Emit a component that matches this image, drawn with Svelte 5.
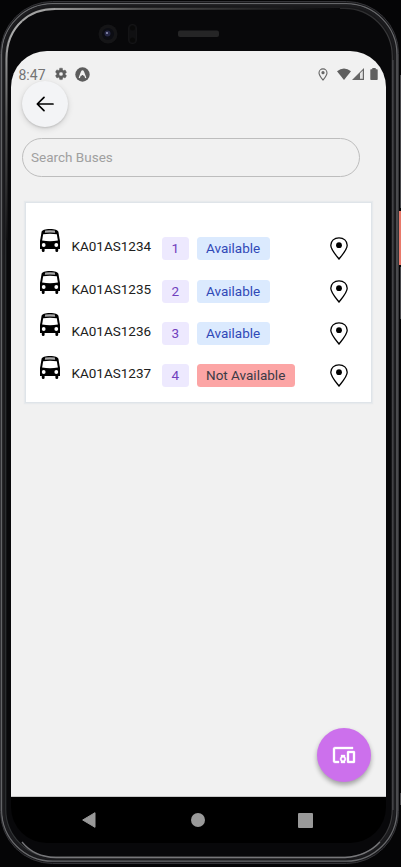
<script>
  const buses = [
    { plate: 'KA01AS1234', route: 1, available: true },
    { plate: 'KA01AS1235', route: 2, available: true },
    { plate: 'KA01AS1236', route: 3, available: true },
    { plate: 'KA01AS1237', route: 4, available: false }
  ];
</script>

<div class="device">
  <svg class="shell" width="401" height="867" viewBox="0 0 401 867" fill="none" aria-hidden="true">
    <defs>
      <linearGradient id="rim" x1="0" y1="0" x2="401" y2="0" gradientUnits="userSpaceOnUse">
        <stop offset="0" stop-color="#2b2e30" /><stop offset=".25" stop-color="#50504f" />
        <stop offset=".75" stop-color="#1b1b1d" /><stop offset="1" stop-color="#3c3c3e" />
      </linearGradient>
      <linearGradient id="shineTop" x1="55" y1="0" x2="340" y2="0" gradientUnits="userSpaceOnUse">
        <stop offset="0" stop-color="#999" /><stop offset=".3" stop-color="#505050" /><stop offset="1" stop-color="#08080a" />
      </linearGradient>
      <linearGradient id="shineSide" x1="0" y1="35" x2="0" y2="240" gradientUnits="userSpaceOnUse">
        <stop offset="0" stop-color="#aaa" /><stop offset=".4" stop-color="#555" /><stop offset="1" stop-color="#131315" />
      </linearGradient>
    </defs>
    <rect x="0.5" y="1.500" width="398" height="862" rx="52" fill="#171719" stroke="#343438" />
    <rect x="1.700" y="3.700" width="395.300" height="857.500" rx="51" stroke="#67686b" stroke-width="1.300" />
    <rect x="3.500" y="5.500" width="391" height="853" rx="49" stroke="#1c1c1f" stroke-width="2" />
    <rect x="5.700" y="8.300" width="386.600" height="848.900" rx="48" fill="#08080a" stroke="url(#rim)" stroke-width="1.200" />
    <path d="M6.500 240V59Q6.500 35 22 21" stroke="url(#shineSide)" stroke-width="2" />
    <path d="M22 21Q35 9 55 9" stroke="#a2a2a2" stroke-width="2" />
    <path d="M55 9L340 8.900" stroke="url(#shineTop)" stroke-width="1.800" />
    <path d="M22 842Q34 857 56 857.500H345Q367 856 380 842" stroke="#77777a" stroke-width="1.300" />
    <path d="M393 60V810" stroke="#505054" />
    <rect x="399" y="211" width="2" height="54" fill="#e9796a" />
    <path d="M400.500 75V208M400.500 267V319M400.500 793V805" stroke="#48484b" />
    <circle cx="108" cy="34" r="9.500" fill="#151517" />
    <circle cx="108" cy="34" r="6" fill="#0c0d13" />
    <circle cx="107.500" cy="33.500" r="3" fill="#252745" />
    <circle cx="107" cy="33" r="1" fill="#9699bd" />
    <rect x="128.500" y="24.500" width="8" height="19" rx="3.500" fill="#101012" stroke="#141416" />
    <circle cx="132.500" cy="28" r="2.500" fill="#090909" /><circle cx="132.500" cy="40" r="2.500" fill="#090909" />
    <rect x="178" y="30.500" width="41" height="6.500" rx="2" fill="#252526" />
  </svg>

  <div class="screen">
    <main>
      <header class="status">
        <span class="time">8:47</span>
        <svg class="gear" width="14" height="14" viewBox="0 0 24 24"><path fill="#5f5f5f" stroke="#5f5f5f" stroke-width=".8" fill-rule="evenodd" d="M19.140 12.940a7 7 0 0 0 0-1.880l2.030-1.580a.5.5 0 0 0 .12-.61l-1.920-3.320a.5.5 0 0 0-.59-.22l-2.390.96a7 7 0 0 0-1.620-.94l-.36-2.540A.5.5 0 0 0 13.930 2h-3.840a.5.5 0 0 0-.47.41l-.37 2.540a7 7 0 0 0-1.620.94l-2.390-.96a.5.5 0 0 0-.59.22L2.740 8.470a.5.5 0 0 0 .12.61l2.030 1.980a7 7 0 0 0 0 1.880l-2.030 1.580a.5.5 0 0 0-.12.61l1.920 3.320c.12.22.37.29.59.22l2.390-.96a7 7 0 0 0 1.620.94l.36 2.540c.05.24.24.41.48.41h3.840c.24 0 .44-.17.47-.41l.36-2.540a7 7 0 0 0 1.620-.94l2.390.96c.22.08.47 0 .59-.22l1.920-3.320a.5.5 0 0 0-.12-.61zM12 15.600a3.600 3.600 0 1 1 0-7.200 3.600 3.600 0 0 1 0 7.200" /></svg>
        <svg class="expo" width="15" height="15" viewBox="0 0 15 15"><circle cx="7.500" cy="7.500" r="7.200" fill="#5d5d5d" /><path d="M4.400 10.500 6.600 4.700Q7.500 3 8.400 4.700l2.200 5.800M6.100 8.300l1.400-2.500 1.400 2.500" fill="none" stroke="#f1f1f1" stroke-width="1.300" stroke-linecap="round" /></svg>
        <span class="spacer"></span>
        <svg class="loc" width="10" height="13" viewBox="0 0 10 13"><path d="M5 12C3.500 10.100 1 7 1 4.900a4 4 0 0 1 8 0C9 7 6.500 10.100 5 12Z" fill="none" stroke="#666" stroke-width="1.100" /><circle cx="5" cy="4.700" r="1.600" fill="#666" /></svg>
        <svg class="wifi" width="14" height="12" viewBox="0 0 14 12"><path d="M0 3.200Q7-2.200 14 3.200L7 12Z" fill="#5f5f5f" /></svg>
        <svg class="cell" width="12" height="12" viewBox="0 0 12 12"><path d="M0 12 12 0V12Z" fill="#666" /><path d="M8 5.300 10.800 2.500V10.800H8Z" fill="#e2e2e2" /></svg>
        <svg class="battery" width="8" height="12" viewBox="0 0 8 12"><path d="M2.300 0H5.700V1.200H7Q7.700 1.200 7.700 2V11.200Q7.700 12 7 12H1Q.3 12 .3 11.200V2Q.3 1.200 1 1.200H2.300Z" fill="#5f5f5f" /></svg>
      </header>

      <button class="back" aria-label="Back">
        <svg width="18" height="16" viewBox="0 0 18 16"><path d="M8 1.300 1.300 8 8 14.700M1.500 8H17" fill="none" stroke="#000" stroke-width="1.700" stroke-linecap="round" stroke-linejoin="round" /></svg>
      </button>

      <input class="search" type="text" placeholder="Search Buses" />

      <section class="card">
        {#each buses as bus}
          <div class="row">
            <svg class="bus" width="20" height="23" viewBox="0 0 20 23">
              <path d="M10 0C15 0 18 .8 18.500 3.200L19.600 10Q20 11 20 12.500V20H0V12.500Q0 11 .4 10L1.500 3.200C2 .8 5 0 10 0Z" />
              <rect x="1.800" y="18" width="2.800" height="5" rx="1.300" /><rect x="15.400" y="18" width="2.800" height="5" rx="1.300" />
              <path d="M5.200 1.500Q10 .9 14.800 1.500L15.200 3.800Q10 3.300 4.800 3.800Z" fill="#aaa" />
              <path d="M3.200 5.200Q10 4.500 16.800 5.200L17.900 11.500Q10 12.900 2.100 11.500Z" fill="#fff" />
              <circle cx="3.700" cy="16" r="1.900" fill="#fff" /><circle cx="16.300" cy="16" r="1.900" fill="#fff" />
            </svg>
            <span class="plate">{bus.plate}</span>
            <span class="badge route">{bus.route}</span>
            <span class="badge" class:free={bus.available} class:busy={!bus.available}>{bus.available ? 'Available' : 'Not Available'}</span>
            <span class="spacer"></span>
            <svg class="pin" width="18" height="23" viewBox="0 0 18 23"><path d="M9 22C6.500 18.800.8 12.700.8 8.300C.8 3.800 4.300.8 9 .8s8.200 3 8.200 7.500C17.200 12.700 11.500 18.800 9 22Z" fill="none" stroke="#000" stroke-width="1.300" /><circle cx="9" cy="8.200" r="2.900" /></svg>
          </div>
        {/each}
      </section>

      <button class="fab" aria-label="Devices">
        <svg width="24" height="24" viewBox="0 0 24 24" fill="#fff" stroke="#fff" stroke-width=".35"><path d="M3 6h18V4H3c-1.100 0-2 .9-2 2v12c0 1.100.9 2 2 2h4v-2H3zm10 6H9v1.780c-.61.55-1 1.330-1 2.220s.39 1.670 1 2.220V20h4v-1.780c.61-.55 1-1.340 1-2.220s-.39-1.670-1-2.220zm-2 5.500c-.83 0-1.500-.67-1.500-1.500s.67-1.500 1.500-1.500 1.500.67 1.500 1.500-.67 1.500-1.500 1.500M22 8h-6c-.5 0-1 .5-1 1v10c0 .5.5 1 1 1h6c.5 0 1-.5 1-1V9c0-.5-.5-1-1-1m-1 10h-4v-8h4z" /></svg>
      </button>
    </main>

    <nav>
      <svg width="14" height="16" viewBox="0 0 14 16"><path d="M13 .7V15.300L.7 8Z" fill="#999" stroke="#999" stroke-width="1" stroke-linejoin="round" /></svg>
      <span class="home"></span>
      <span class="recent"></span>
    </nav>
  </div>
</div>

<style>
  :global(body) { margin: 0; background: #050506; }
  * { box-sizing: border-box; }
  svg { display: block; flex: none; }
  button { border: 0; padding: 0; display: flex; align-items: center; justify-content: center; border-radius: 50%; }
  .device { position: relative; width: 401px; height: 867px; padding: 51px 15px 24px 11px; overflow: hidden; background: #050506; font-family: Roboto, sans-serif; }
  .shell { position: absolute; left: 0; top: 0; }
  .screen { position: relative; height: 792px; border-radius: 36px; overflow: hidden; display: flex; flex-direction: column; background: #000; }
  main { position: relative; height: 746px; background: #f1f1f1; border-bottom: 1px solid #c8c8c8; }
  .status { height: 30px; display: flex; padding: 15.500px 8px 0 7.500px; }
  .time { font-size: 14px; line-height: 17px; color: #747474; width: 35.500px; }
  .gear { margin-top: .5px; }
  .expo { margin-left: 7px; }
  .spacer { flex: 1; }
  .loc { margin-top: 1px; }
  .wifi { margin: 1.500px 0 0 9px; }
  .cell { margin: 1.500px 0 0 1.500px; }
  .battery { margin: 1.500px 0 0 6px; }
  .back { width: 46px; height: 46px; margin: 0 0 0 11px; background: #f3f4f6; box-shadow: 0 2px 6px #0002, 0 1px 2px #0002; }
  .search { display: block; width: 338px; height: 39px; margin: 11px 0 0 11px; padding: 0 8px 1px; border: 1px solid #bdbdbd; border-radius: 20px; background: transparent; font: 13.500px Roboto, sans-serif; outline: none; }
  .search::placeholder { color: #a0a0a0; opacity: 1; }
  .card { width: 347px; height: 201px; margin: 25px 0 0 13.500px; padding: 25.200px 22.500px 0 14.500px; background: #fff; border: 1.500px solid #dfe4e9; box-shadow: 0 0 1px 1px #dfe4e988; }
  .row { height: 42.400px; display: flex; align-items: flex-start; }
  .bus { margin-top: .5px; }
  .plate { width: 90.500px; margin-left: 11.500px; padding-top: 9px; font-size: 13.500px; line-height: 18px; color: #202020; }
  .badge { height: 23px; margin-top: 9px; padding: 0 9px; border-radius: 3.500px; font-size: 13.500px; line-height: 23.500px; white-space: nowrap; }
  .route { width: 27px; margin-right: 8px; padding: 0 9.500px; background: #ede9fe; color: #7040bd; }
  .free { width: 73px; background: #dbeafe; color: #3049b7; }
  .busy { width: 98px; background: #fca5a5; color: #3b3b46; }
  .pin { margin-top: 9px; }
  .fab { position: absolute; right: 15.500px; bottom: 14.500px; width: 54px; height: 54px; background: #cc70ec; box-shadow: 0 3px 5px #0005; }
  nav { height: 46px; display: flex; align-items: center; padding-left: 71px; }
  .home { width: 14px; height: 14px; margin-left: 95px; border-radius: 50%; background: #999; }
  .recent { width: 15px; height: 15px; margin-left: 93px; border-radius: 1px; background: #999; }
</style>
